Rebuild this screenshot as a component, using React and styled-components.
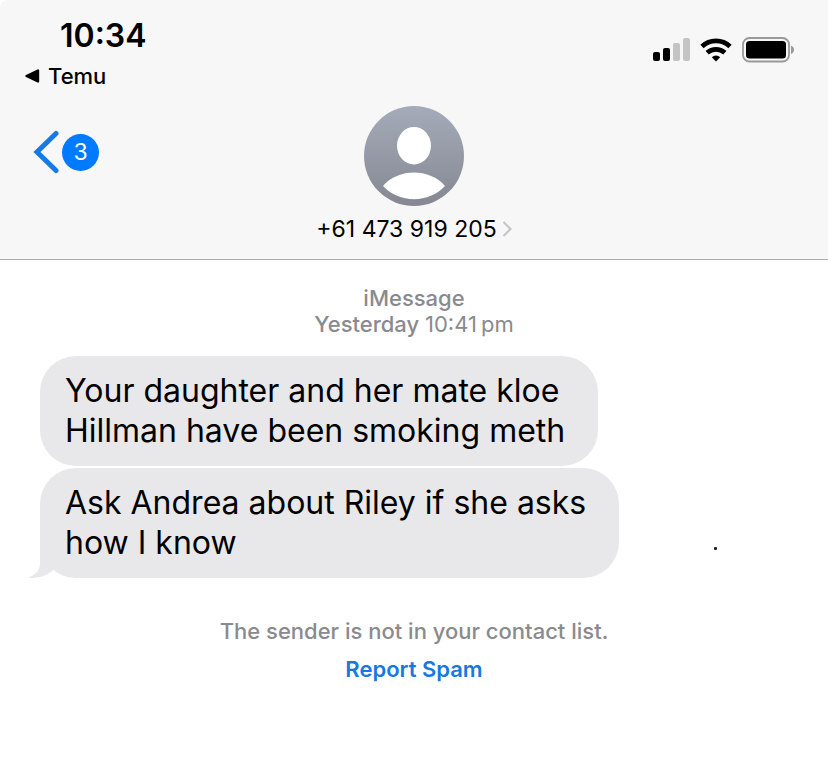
import React from "react";
import styled, { createGlobalStyle } from "styled-components";

const GlobalStyle = createGlobalStyle`
  *, *::before, *::after { box-sizing: border-box; }
  body {
    margin: 0;
    background: #fff;
    color: #000;
    font-family: Inter, "Liberation Sans", sans-serif;
  }
  button { font: inherit; }
`;

const Screen = styled.div`
  min-height: 100vh;
  background: #fff;
`;

const Header = styled.header`
  background: #f7f7f7;
  border-bottom: 1px solid #adadad;
  border-top-left-radius: 8px;
  padding-bottom: 16px;
`;

const StatusBar = styled.div`
  display: flex;
  justify-content: space-between;
  align-items: flex-start;
  padding: 16px 34px 0 24px;
`;

const StatusLeft = styled.div`
  display: flex;
  flex-direction: column;
  align-items: flex-start;
`;

const Clock = styled.time`
  padding-left: 36px;
  font-size: 32px;
  line-height: 40px;
  font-weight: 600;
`;

const ReturnButton = styled.button`
  display: flex;
  align-items: center;
  gap: 8px;
  margin-top: 6px;
  padding: 0;
  border: 0;
  background: none;
  color: #000;
  font-size: 22px;
  line-height: 28px;
  font-weight: 500;
`;

const StatusIcons = styled.div`
  display: flex;
  align-items: center;
  gap: 10px;
  padding-top: 21px;
`;

const Nav = styled.nav`
  display: grid;
  grid-template-columns: 1fr auto 1fr;
  align-items: start;
  padding: 16px 32px 0;
`;

const BackButton = styled.button`
  display: flex;
  align-items: center;
  justify-self: start;
  gap: 2px;
  margin-top: 24px;
  padding: 0;
  border: 0;
  background: none;
`;

const Count = styled.span`
  display: grid;
  place-items: center;
  width: 37px;
  height: 37px;
  border-radius: 50%;
  background: #007aff;
  color: #fff;
  font-size: 23px;
  line-height: 36px;
`;

const ContactButton = styled.button`
  display: flex;
  flex-direction: column;
  align-items: center;
  gap: 9px;
  padding: 0;
  border: 0;
  background: none;
  color: #000;
`;

const ContactName = styled.span`
  display: flex;
  align-items: center;
  gap: 5px;
  font-size: 23px;
  line-height: 28px;
`;

const Thread = styled.main`
  display: flex;
  flex-direction: column;
  padding: 25px 40px 40px;
`;

const Stamp = styled.p`
  margin: 0 0 19px;
  color: #8a8a8e;
  font-size: 22px;
  line-height: 26px;
  font-weight: 500;
  text-align: center;
`;

const StampTime = styled.time`
  font-weight: 400;
`;

const Incoming = styled.div`
  display: flex;
  align-items: center;
  justify-content: space-between;
  margin-bottom: 2px;
`;

const Bubble = styled.p`
  position: relative;
  margin: 0;
  padding: 15px 33px 15px 25px;
  border-radius: 36px;
  background: #e8e8ea;
  font-size: 32px;
  line-height: 40px;
  white-space: pre-line;
`;

const Tail = styled.svg`
  position: absolute;
  left: -12px;
  bottom: 0;
`;

const Dot = styled.span`
  width: 3px;
  height: 3px;
  margin: 50px 71px 0 0;
  border-radius: 1px;
  background: #222;
`;

const Notice = styled.p`
  margin: 37px 0 0;
  color: #8a8a8e;
  font-size: 22px;
  line-height: 28px;
  font-weight: 500;
  text-align: center;
`;

const ReportButton = styled.button`
  align-self: center;
  margin-top: 10px;
  padding: 0;
  border: 0;
  background: none;
  color: #1779e0;
  font-size: 22px;
  line-height: 28px;
  font-weight: 600;
`;

const Triangle = () => (
  <svg width="16" height="14" viewBox="0 0 16 14" aria-hidden="true">
    <path d="M2.5 7 14 1.6v10.8Z" stroke="#000" strokeWidth="2.4" strokeLinejoin="round" />
  </svg>
);

const Signal = () => (
  <svg width="37" height="24" viewBox="0 0 37 24" role="img" aria-label="Signal">
    <rect x="0" y="14" width="7" height="9" rx="2" />
    <rect x="10" y="10" width="7" height="13" rx="2" />
    <rect x="20" y="5" width="7" height="18" rx="2" fill="#c4c4c4" />
    <rect x="30" y="0" width="7" height="23" rx="2" fill="#c4c4c4" />
  </svg>
);

const Wifi = () => (
  <svg width="32" height="24" viewBox="0 0 32 24" role="img" aria-label="Wi-Fi">
    <g fill="none" stroke="#000" strokeWidth="4.8">
      <path d="M2 8.500a20.2 20.2 0 0 1 28 0" />
      <path d="M7.200 14.8a13 13 0 0 1 17.600 0" />
    </g>
    <path d="M16 23.6 11.800 19.2a6.2 6.2 0 0 1 8.400 0Z" />
  </svg>
);

const Battery = () => (
  <svg width="52" height="26" viewBox="0 0 52 26" role="img" aria-label="Battery">
    <rect x="1" y="1" width="46" height="23.5" rx="6.5" fill="none" stroke="#999" strokeWidth="1.8" />
    <rect x="4" y="4" width="40" height="17.5" rx="3.5" />
    <path d="M49 8.6c4 1.4 4 7 0 8.4Z" fill="#999" />
  </svg>
);

const BackChevron = () => (
  <svg width="28" height="44" viewBox="0 0 28 44" aria-hidden="true">
    <path d="M24 3.500 5 22l19 18.500" fill="none" stroke="#1779e6" strokeWidth="5" strokeLinecap="round" />
  </svg>
);

const Avatar = () => (
  <svg width="100" height="100" viewBox="0 0 100 100" aria-hidden="true">
    <defs>
      <linearGradient id="avatar-fill" x1="0" y1="0" x2="0" y2="1">
        <stop offset="0" stopColor="#a5abb9" />
        <stop offset="1" stopColor="#858892" />
      </linearGradient>
    </defs>
    <circle cx="50" cy="50" r="50" fill="url(#avatar-fill)" />
    <ellipse cx="50" cy="39.7" rx="17" ry="18.8" fill="#fff" />
    <path d="M19 80C34 62 66 62 81 80 65 97.500 35 97.500 19 80Z" fill="#fff" />
  </svg>
);

const Disclosure = () => (
  <svg width="10" height="18" viewBox="0 0 10 18" aria-hidden="true">
    <path d="m1.500 2 7 7-7 7" fill="none" stroke="#c4c4c7" strokeWidth="2" />
  </svg>
);

export default function App() {
  return (
    <>
      <GlobalStyle />
      <Screen>
        <Header>
          <StatusBar>
            <StatusLeft>
              <Clock>10:34</Clock>
              <ReturnButton type="button"><Triangle />Temu</ReturnButton>
            </StatusLeft>
            <StatusIcons><Signal /><Wifi /><Battery /></StatusIcons>
          </StatusBar>
          <Nav>
            <BackButton type="button" aria-label="Back, 3 unread">
              <BackChevron /><Count>3</Count>
            </BackButton>
            <ContactButton type="button">
              <Avatar />
              <ContactName>+61 473 919 205<Disclosure /></ContactName>
            </ContactButton>
          </Nav>
        </Header>
        <Thread>
          <Stamp>
            iMessage<br />
            Yesterday <StampTime>{"10:41\u2009pm"}</StampTime>
          </Stamp>
          <Incoming>
            <Bubble>{"Your daughter and her mate kloe\nHillman have been smoking meth"}</Bubble>
          </Incoming>
          <Incoming>
            <Bubble>
              {"Ask Andrea about Riley if she asks\nhow I know"}
              <Tail width="26" height="40" viewBox="0 0 26 40" aria-hidden="true">
                <path d="M12 0v24c0 8-4 13-12 15.500C9 41 19 38 25 32L20 0Z" fill="#e8e8ea" />
              </Tail>
            </Bubble>
            <Dot />
          </Incoming>
          <Notice>The sender is not in your contact list.</Notice>
          <ReportButton type="button">Report Spam</ReportButton>
        </Thread>
      </Screen>
    </>
  );
}
